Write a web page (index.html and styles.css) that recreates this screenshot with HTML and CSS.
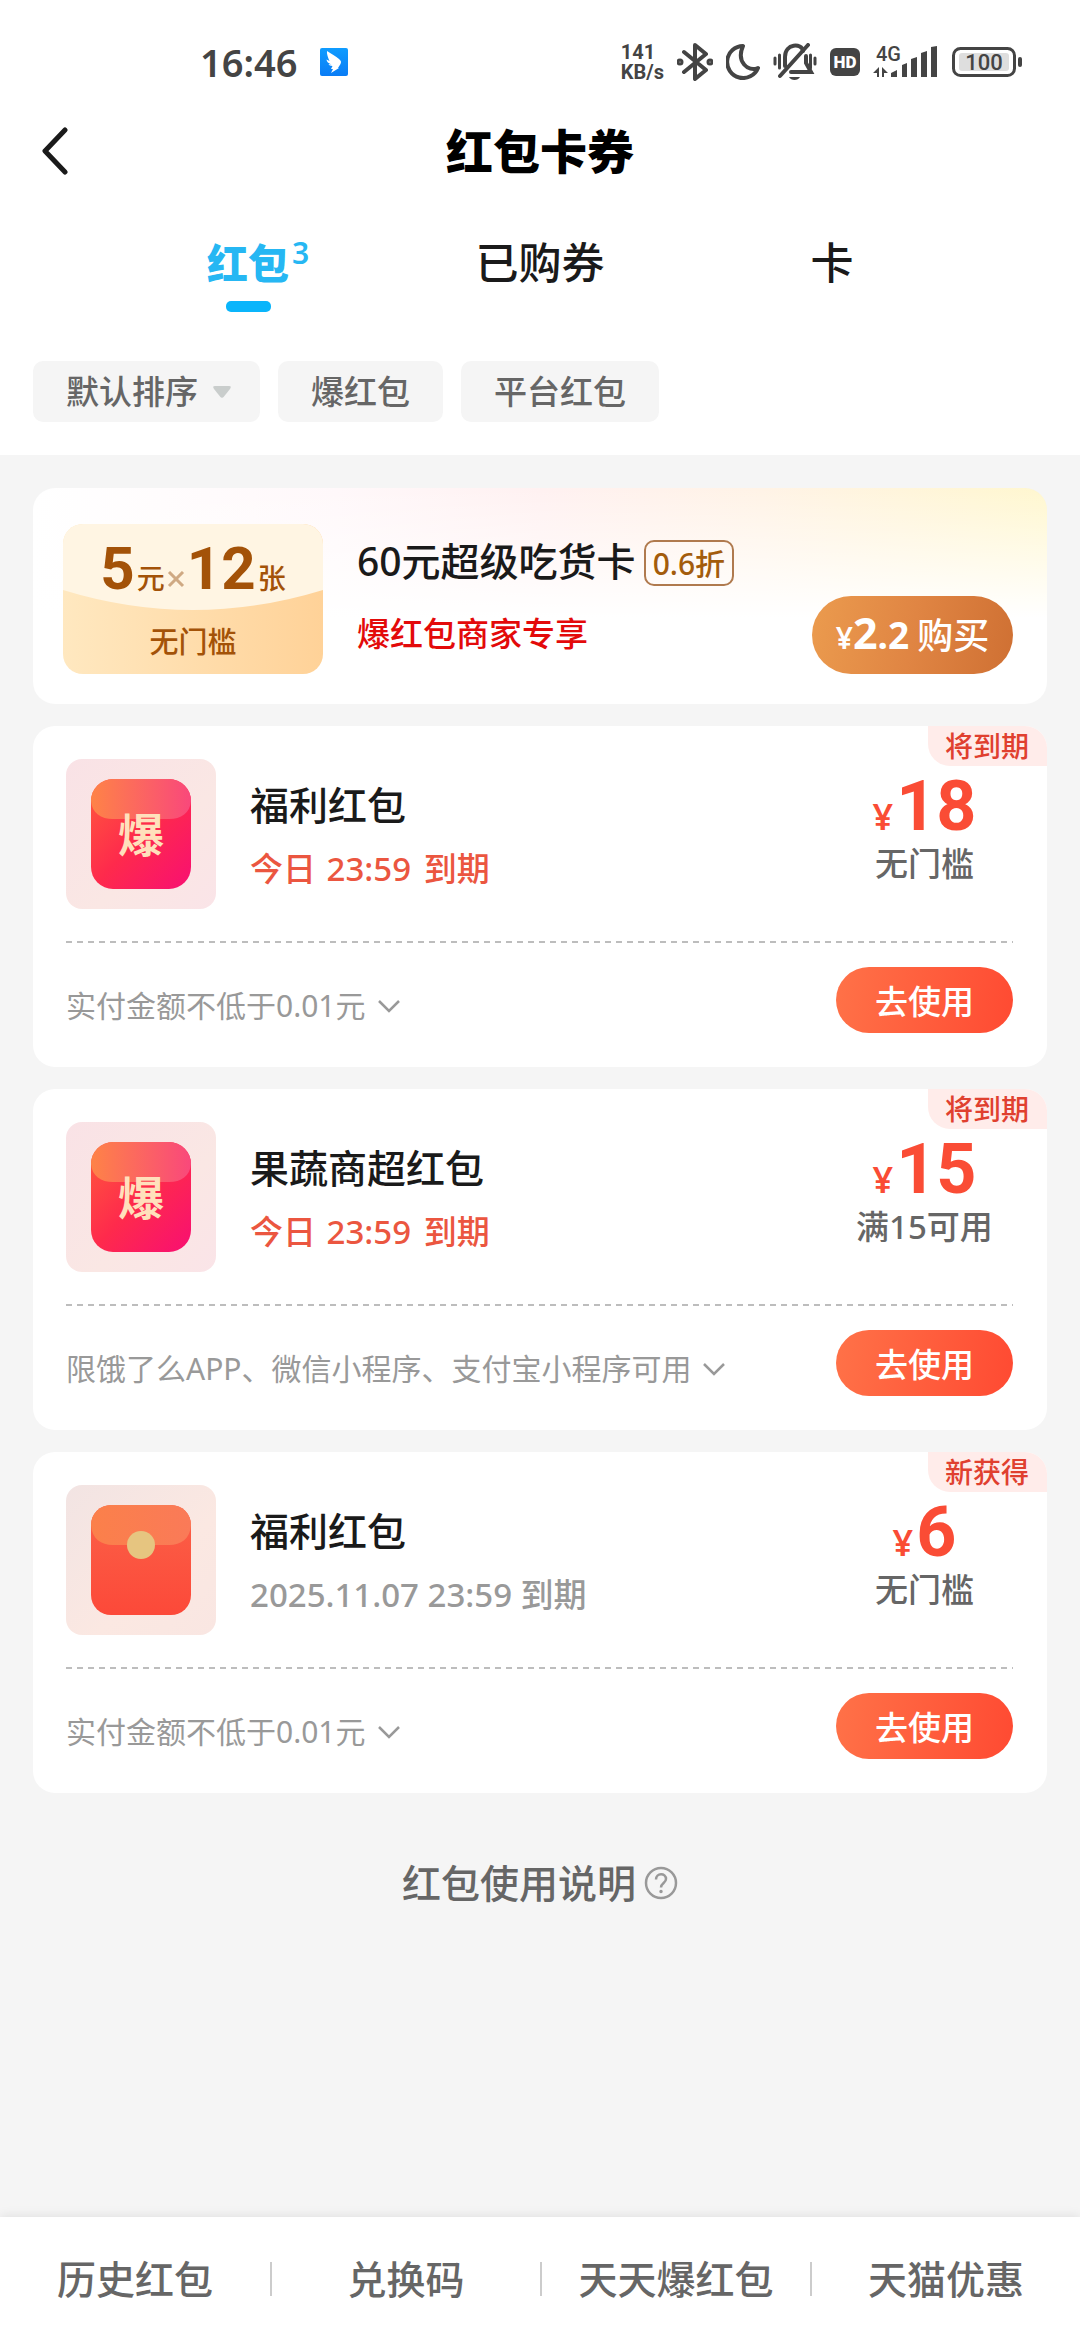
FILE: index.html
```html
<!DOCTYPE html>
<html lang="zh-CN">
<head>
<meta charset="utf-8">
<meta name="viewport" content="width=device-width">
<title>红包卡券</title>
<link rel="stylesheet" href="styles.css">
</head>
<body>
<svg class="defs" aria-hidden="true">
  <defs>
    <linearGradient id="hot" x1="0" y1="0" x2="1" y2="1"><stop offset="0" stop-color="#ff5a3c"/><stop offset=".5" stop-color="#fe2a4c"/><stop offset="1" stop-color="#f80f72"/></linearGradient>
    <linearGradient id="hot-flap" x1="0" y1="0" x2="1" y2="0"><stop offset="0" stop-color="#fe8347"/><stop offset="1" stop-color="#f9487b"/></linearGradient>
    <linearGradient id="warm" x1="0" y1="0" x2="0" y2="1"><stop offset="0" stop-color="#fb6148"/><stop offset="1" stop-color="#fc4939"/></linearGradient>
    <linearGradient id="warm-flap" x1="0" y1="0" x2="1" y2="0"><stop offset="0" stop-color="#fb804a"/><stop offset="1" stop-color="#fa7a58"/></linearGradient>
    <linearGradient id="ding" x1="0" y1="0" x2="0" y2="1"><stop offset="0" stop-color="#0f9cff"/><stop offset="1" stop-color="#0a7cf5"/></linearGradient>
    <symbol id="envelope-hot" viewBox="0 0 100 110">
      <rect width="100" height="110" rx="22" fill="url(#hot)"/>
      <path d="M0 22A22 22 0 0 1 22 0H78A22 22 0 0 1 100 22C99 34 90 40 78 40H22C10 40 1 34 0 22Z" fill="url(#hot-flap)"/>
      <text x="50" y="73" class="envelope-word">爆</text>
    </symbol>
    <symbol id="envelope-warm" viewBox="0 0 100 110">
      <rect width="100" height="110" rx="20" fill="url(#warm)"/>
      <path d="M0 20A20 20 0 0 1 20 0H80A20 20 0 0 1 100 20C99 34 90 40 78 40H22C10 40 1 34 0 20Z" fill="url(#warm-flap)"/>
      <circle cx="50" cy="40" r="14" fill="#e6c580"/>
    </symbol>
    <symbol id="chevron" viewBox="0 0 24 14"><path d="M2 2l10 10L22 2" fill="none" stroke="#999" stroke-width="2.500"/></symbol>
  </defs>
</svg>

<header class="top">
  <div class="status">
    <span class="clock">16:46</span>
    <svg class="app-icon" width="28" height="28" viewBox="0 0 28 28"><rect width="28" height="28" rx="2" fill="url(#ding)"/><path d="M7 3c4 3 9 5 12 8c2 1.500 2.500 3 1.500 5L18 20h1l-8 5 2-4h-2l1.500-3c-2 0-3.500-1-4-2l3 .5c-3-1-5-3-5-5l3 1.500C8 9.500 6.500 6 7 3z" fill="#fff"/></svg>
    <div class="status-right">
      <span class="speed"><span>141</span><span>KB/s</span></span>
      <svg width="36" height="38" viewBox="0 0 36 38" fill="none" stroke="#444" stroke-width="4" stroke-linejoin="round" stroke-linecap="round"><path d="M7 9L29 27L18 36V2L29 11L7 29"/><circle cx="3" cy="19" r="1.500"/><circle cx="33" cy="19" r="1.500"/></svg>
      <svg width="34" height="36" viewBox="0 0 34 36"><path d="M17 2A16 16 0 1 0 32 24C22 28 10 18 17 2Z" fill="none" stroke="#444" stroke-width="4" stroke-linejoin="round"/></svg>
      <svg width="44" height="38" viewBox="0 0 44 38" fill="none" stroke="#444" stroke-width="3" stroke-linecap="round"><path d="M2 15v6M6.500 12v13M37.500 12v13M42 15v6"/><path d="M12 23V14C12 0 29 0 30 8M33 13v7l5 9H18" stroke-width="4"/><path d="M35 2L7 33" stroke-width="4"/><path d="M16 34H27C25 38 18 38 16 34Z" fill="#444" stroke="none"/></svg>
      <svg width="30" height="28" viewBox="0 0 30 28"><rect width="30" height="28" rx="6" fill="#444"/><text x="15" y="20" class="hd-word">HD</text></svg>
      <svg width="66" height="44" viewBox="0 -5 66 44" fill="#444"><text x="3" y="16" class="net-word">4G</text><path d="M6 22V32H4V28H0ZM9 32V22L15 28H11V32ZM18 32v-4l6-3v7ZM29 32V20l5-2v14ZM38 32V14l6-2v20ZM48 32V8l6-2v26ZM58 32V2l6-1v31Z"/></svg>
      <svg width="70" height="30" viewBox="0 0 70 30"><rect x="1.500" y="1.500" width="61" height="27" rx="7" fill="none" stroke="#444" stroke-width="3"/><rect x="7" y="6" width="50" height="18" rx="3" fill="#dedede"/><rect x="66" y="10" width="4" height="10" rx="2" fill="#444"/><text x="32" y="23" class="battery-word">100</text></svg>
    </div>
  </div>
  <div class="titlebar">
    <button class="back" type="button" aria-label="返回"><svg width="26" height="48" viewBox="0 0 26 48"><path d="M23 3L3 24L23 45" fill="none" stroke="#1a1a1a" stroke-width="5" stroke-linecap="round" stroke-linejoin="round"/></svg></button>
    <h1>红包卡券</h1>
  </div>
  <nav class="tabs">
    <a class="tab tab-active" href="#packets"><span class="tab-label">红包<sup class="count">3</sup></span></a>
    <a class="tab" href="#bought"><span class="tab-label">已购券</span></a>
    <a class="tab" href="#cards"><span class="tab-label">卡</span></a>
  </nav>
  <div class="filters">
    <button class="chip" type="button">默认排序<svg width="18" height="12" viewBox="0 0 18 12"><path d="M2 0H16Q19 0 17 3L11 10.500Q9 13 7 10.500L1 3Q-1 0 2 0Z" fill="#c9cdcc"/></svg></button>
    <button class="chip" type="button">爆红包</button>
    <button class="chip" type="button">平台红包</button>
  </div>
</header>

<main class="content" id="packets">
  <section class="promo">
    <div class="ticket">
      <svg class="ticket-bg" viewBox="0 0 260 150" preserveAspectRatio="none"><defs><linearGradient id="gold" x1="0" y1="0" x2="1" y2="0"><stop offset="0" stop-color="#ffe8c0"/><stop offset="1" stop-color="#ffd298"/></linearGradient></defs><rect width="260" height="150" fill="url(#gold)"/><path d="M0 0H260V66Q130 106 0 66Z" fill="#fff5e3"/></svg>
      <div class="ticket-sum"><b>5</b><span>元</span><svg width="18" height="18" viewBox="0 0 18 18"><path d="M2 1L16 15M16 1L2 15" stroke="#cfa983" stroke-width="3"/></svg><b>12</b><span>张</span></div>
      <div class="ticket-note">无门槛</div>
    </div>
    <div class="promo-info">
      <h2><span class="promo-name">60元超级吃货卡</span><span class="discount">0.6折</span></h2>
      <p>爆红包商家专享</p>
    </div>
    <button class="buy" type="button"><span class="buy-yen">¥</span><b class="buy-int">2</b><b class="buy-dec">.2</b><span class="buy-word">购买</span></button>
  </section>

  <article class="coupon">
    <span class="tag">将到期</span>
    <div class="coupon-main">
      <div class="thumb"><svg width="100" height="110"><use href="#envelope-hot"/></svg></div>
      <div class="coupon-info"><h2>福利红包</h2><p class="expiry urgent">今日 <time>23:59</time> 到期</p></div>
      <div class="value"><div class="price"><span>¥</span><b>18</b></div><div class="rule">无门槛</div></div>
    </div>
    <div class="coupon-foot">
      <button class="note" type="button">实付金额不低于0.01元<svg width="24" height="14"><use href="#chevron"/></svg></button>
      <button class="use" type="button">去使用</button>
    </div>
  </article>

  <article class="coupon">
    <span class="tag">将到期</span>
    <div class="coupon-main">
      <div class="thumb"><svg width="100" height="110"><use href="#envelope-hot"/></svg></div>
      <div class="coupon-info"><h2>果蔬商超红包</h2><p class="expiry urgent">今日 <time>23:59</time> 到期</p></div>
      <div class="value"><div class="price"><span>¥</span><b>15</b></div><div class="rule">满15可用</div></div>
    </div>
    <div class="coupon-foot">
      <button class="note" type="button">限饿了么APP、微信小程序、支付宝小程序可用<svg width="24" height="14"><use href="#chevron"/></svg></button>
      <button class="use" type="button">去使用</button>
    </div>
  </article>

  <article class="coupon">
    <span class="tag">新获得</span>
    <div class="coupon-main">
      <div class="thumb thumb-warm"><svg width="100" height="110"><use href="#envelope-warm"/></svg></div>
      <div class="coupon-info"><h2>福利红包</h2><p class="expiry">2025.11.07 23:59 到期</p></div>
      <div class="value"><div class="price"><span>¥</span><b>6</b></div><div class="rule">无门槛</div></div>
    </div>
    <div class="coupon-foot">
      <button class="note" type="button">实付金额不低于0.01元<svg width="24" height="14"><use href="#chevron"/></svg></button>
      <button class="use" type="button">去使用</button>
    </div>
  </article>

  <a class="help" href="#help">红包使用说明<svg width="34" height="34" viewBox="0 0 34 34" fill="none" stroke="#999" stroke-width="2.500"><circle cx="17" cy="17" r="15"/><path d="M12 13.500C12 6.500 22 6.500 22 13C22 17 17 17 17 21.500"/><circle cx="17" cy="25.500" r="1" fill="#999" stroke-width="1.500"/></svg></a>
</main>

<nav class="bottom">
  <a href="#history">历史红包</a>
  <a href="#redeem">兑换码</a>
  <a href="#daily">天天爆红包</a>
  <a href="#tmall">天猫优惠</a>
</nav>
</body>
</html>
```

FILE: styles.css
```css
* { box-sizing: border-box; }

body {
  margin: 0;
  min-height: 100vh;
  display: flex;
  flex-direction: column;
  background: #f5f5f5;
  color: #1a1a1a;
  font-family: "Noto Sans", "Noto Sans CJK SC", sans-serif;
  font-weight: 500;
}

h1, h2, p { margin: 0; font-weight: 500; }
a { color: inherit; text-decoration: none; }
button { border: 0; padding: 0; background: none; color: inherit; font: inherit; }
svg { flex: none; display: block; }
.defs { position: absolute; width: 0; height: 0; }

/* header */
.top { background: #fff; }

.status {
  display: flex;
  align-items: center;
  height: 88px;
  padding: 36px 58px 0 200px;
  color: #444;
}
.clock { font-size: 38px; line-height: 52px; font-weight: 600; }
.app-icon { margin-left: 23px; }
.status-right { display: flex; align-items: center; gap: 13px; margin-left: auto; }
.speed { display: flex; flex-direction: column; font-family: Roboto, sans-serif; font-size: 20px; line-height: 20px; font-weight: 700; }
.hd-word { font-family: Roboto, sans-serif; font-size: 17px; font-weight: 900; fill: #fff; text-anchor: middle; }
.net-word { font-family: Roboto, sans-serif; font-size: 20px; font-weight: 500; }
.battery-word { font-family: Roboto, sans-serif; font-size: 22px; font-weight: 500; fill: #444; text-anchor: middle; }

.titlebar {
  display: grid;
  grid-template-columns: 1fr auto 1fr;
  align-items: center;
  height: 126px;
  padding: 0 42px;
}
.back { justify-self: start; }
h1 { color: #000; font-size: 47px; line-height: 64px; font-weight: 900; }

.tabs {
  display: grid;
  grid-template-columns: repeat(3, 1fr);
  justify-items: center;
  padding: 25px 102px 0;
}
.tab { display: flex; flex-direction: column; align-items: center; gap: 14px; font-size: 43px; line-height: 48px; }
.tab-label { position: relative; }
.tab-active { color: #26b7f3; font-weight: 800; font-size: 41px; }
.tab-active::after { content: ""; width: 45px; height: 11px; border-radius: 5px; background: #0ab5fb; }
.count { position: absolute; left: 100%; top: -6px; margin-left: 3px; font-size: 30px; line-height: 40px; font-weight: 600; }

.filters { display: flex; gap: 18px; padding: 49px 33px 33px; }
.chip {
  display: flex;
  align-items: center;
  gap: 15px;
  height: 61px;
  padding: 0 33px;
  border-radius: 10px;
  background: #f5f5f5;
  color: #666;
  font-size: 33px;
  line-height: 60px;
}
.chip:first-child { padding-right: 29px; }

/* cards */
.content { display: flex; flex-direction: column; gap: 22px; padding: 33px; }

.promo {
  display: flex;
  gap: 34px;
  padding: 36px 34px 30px 30px;
  border-radius: 22px;
  background:
    linear-gradient(180deg, rgba(255, 255, 255, 0) 0%, #fff 60%),
    linear-gradient(90deg, #fff 0%, #fff8fa 30%, #fff1f1 50%, #fff3e6 72%, #fff7cf 100%);
}
.ticket {
  position: relative;
  flex: none;
  width: 260px;
  height: 150px;
  border-radius: 20px;
  overflow: hidden;
  color: #a35208;
  text-align: center;
}
.ticket-bg { position: absolute; width: 100%; height: 100%; }
.ticket-sum { position: relative; display: flex; justify-content: center; align-items: baseline; gap: 2px; height: 76px; padding-top: 12px; line-height: 66px; }
.ticket-sum b { font-family: Roboto, sans-serif; font-size: 60px; font-weight: 700; }
.ticket-sum span { font-size: 28px; }
.ticket-note { position: relative; padding-top: 22px; font-size: 29px; line-height: 40px; }

.promo-info { flex: 1; padding-top: 16px; }
.promo-info h2 { display: flex; align-items: flex-start; gap: 8px; height: 46px; font-size: 39px; }
.promo-name { line-height: 42px; white-space: nowrap; }
.discount { height: 46px; padding: 0 7px; border: 2px solid #b07a4e; border-radius: 10px; color: #a35c0c; font-size: 30px; line-height: 44px; white-space: nowrap; }
.promo-info p { padding-top: 26px; color: #e30a0a; font-size: 33px; line-height: 44px; }

.buy {
  align-self: flex-end;
  display: flex;
  justify-content: center;
  align-items: baseline;
  width: 201px;
  height: 78px;
  border-radius: 39px;
  background: linear-gradient(100deg, #eb9b4e, #e08543 50%, #cf7033);
  color: #fff;
  line-height: 74px;
}
.buy-yen { font-size: 30px; font-weight: 600; }
.buy-int { font-size: 43px; font-weight: 700; }
.buy-dec { font-size: 37px; font-weight: 700; }
.buy-word { margin-left: 8px; font-size: 36px; }

.coupon { position: relative; padding: 33px 34px 34px 33px; border-radius: 22px; background: #fff; }
.tag {
  position: absolute;
  top: 0;
  right: 0;
  padding: 0 18px 0 17px;
  border-radius: 0 22px 0 22px;
  background: #ffecea;
  color: #e0402f;
  font-size: 28px;
  line-height: 40px;
}
.coupon-main { display: flex; gap: 34px; }
.thumb {
  flex: none;
  display: grid;
  place-items: center;
  width: 150px;
  height: 150px;
  border-radius: 16px;
  background: linear-gradient(135deg, #f9e2e6, #fae7e4 60%, #fae4e8);
}
.thumb-warm { background: linear-gradient(135deg, #f2e4e3, #fbe8e2 60%, #f9e6e2); }
.envelope-word { fill: #ffe0bc; font-size: 46px; font-weight: 700; text-anchor: middle; }
.coupon-info { flex: 1; padding-top: 23px; }
.coupon-info h2 { font-size: 39px; line-height: 46px; }
.expiry { padding-top: 21px; color: #999; font-size: 33px; line-height: 40px; }
.urgent { color: #eb5640; }
.urgent time { margin: 0 4px 0 2px; }

.value { width: 177px; padding-top: 12px; text-align: center; }
.price { display: flex; justify-content: center; align-items: baseline; gap: 3px; height: 70px; color: #fa4c35; line-height: 70px; }
.price span { font-size: 36px; font-weight: 600; }
.price b { font-family: Roboto, sans-serif; font-size: 70px; font-weight: 700; }
.rule { padding-top: 3px; color: #666; font-size: 33px; line-height: 40px; white-space: nowrap; }

.coupon-foot {
  display: flex;
  justify-content: space-between;
  align-items: flex-end;
  margin-top: 32px;
  padding-top: 26px;
  background: repeating-linear-gradient(90deg, #bdbdbd 0 6px, transparent 6px 11px) top / 100% 2px no-repeat;
}
.note { display: flex; align-items: center; gap: 11px; color: #999; font-size: 30px; line-height: 54px; font-weight: 400; }
.use {
  width: 177px;
  height: 66px;
  border-radius: 33px;
  background: linear-gradient(100deg, #ff7248, #ff4a32);
  color: #fff;
  font-size: 33px;
  font-weight: 500;
}

.help { display: flex; justify-content: center; align-items: center; gap: 8px; padding-top: 41px; color: #666; font-size: 39px; line-height: 54px; }

/* bottom bar */
.bottom {
  display: grid;
  grid-template-columns: repeat(4, 1fr);
  align-items: center;
  height: 123px;
  margin-top: auto;
  background: #fff;
  box-shadow: 0 -2px 10px rgba(0, 0, 0, 0.08);
  color: #666;
  font-size: 39px;
  line-height: 34px;
  text-align: center;
}
.bottom a + a { border-left: 2px solid #ccc; }
```
